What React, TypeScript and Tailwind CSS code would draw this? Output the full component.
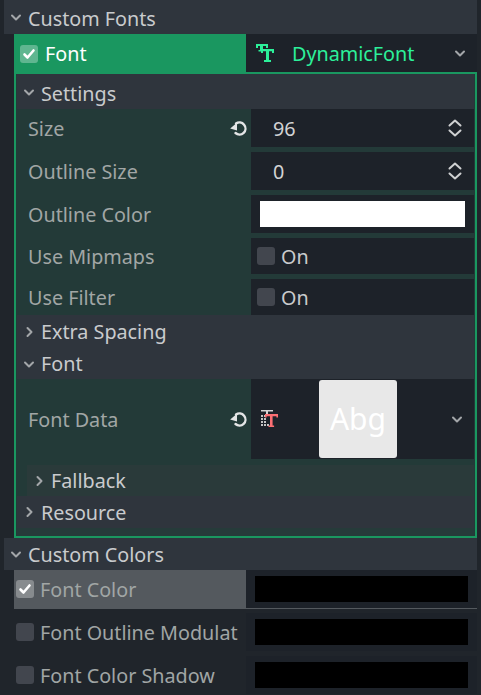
import React from "react";

const Chevron = ({ open, className = "" }: { open: boolean; className?: string }) => (
  <svg width="12" height="12" viewBox="0 0 12 12" className={`flex-none ${className}`} fill="none" stroke="#a3a6a9" strokeWidth="2" strokeLinecap="round" strokeLinejoin="round">
    {open ? <path d="M2 4.5 6 8.5l4-4" /> : <path d="M4.5 2 8.5 6l-4 4" />}
  </svg>
);

const Reset = () => (
  <svg width="18" height="18" viewBox="0 0 18 18" className="flex-none" fill="none">
    <path d="M7 4.6A6 6 0 1 1 6.5 14" stroke="#e4e5e6" strokeWidth="2.4" strokeLinecap="round" />
    <path d="M1.2 9.5 8 3.8V11.6z" fill="#e4e5e6" />
  </svg>
);

const Spin = () => (
  <svg width="14" height="18" viewBox="0 0 14 18" className="flex-none" fill="none" stroke="#cfd1d2" strokeWidth="2" strokeLinecap="round" strokeLinejoin="round">
    <path d="M1.5 6.5 7 1.5l5.5 5" />
    <path d="M1.5 11.5 7 16.5l5.5-5" />
  </svg>
);

const Check = ({ on }: { on: boolean }) => (
  <span className={`flex h-[18px] w-[18px] flex-none items-center justify-center rounded-[3px] ${on ? "bg-white/30" : "bg-[#42464e]"}`}>
    {on && (
      <svg width="14" height="14" viewBox="0 0 14 14" fill="none" stroke="#ffffff" strokeWidth="2.6" strokeLinecap="round" strokeLinejoin="round">
        <path d="M2.5 7.5 5.5 10.5 11.5 3.5" />
      </svg>
    )}
  </span>
);

const FontIcon = () => (
  <svg width="18" height="20" viewBox="0 0 18 20" className="flex-none" fill="#2cf09a">
    <path d="M0 1h12v2H0zM0 1h2v4H0zM10 1h2v4h-2zM4 1h3v7H4zM2.5 7H5v1.5H2.5z" />
    <path d="M5 6h13v2.2H5zM5 6h2v4H5zM16 6h2v4h-2zM10 6h3v12h-3zM8 17h7v2H8z" />
  </svg>
);

const FontDataIcon = () => (
  <svg width="18" height="18" viewBox="0 0 18 18" className="flex-none">
    <path fill="#d4d4d4" d="M1 0h12v1.5H1zM6 0h2v4H6z" />
    <path fill="#c4c4c4" d="M1 5h2v2H1zM4 5h2v2H4zM1 8h2v2H1zM4 8h2v2H4zM1 11h2v2H1zM4 11h2v2H4zM1 14h2v2H1zM4 14h2v2H4zM7 14h2v2H7z" />
    <path fill="#fb6f73" d="M5 4h13v2.2H5zM5 4h1.6v3.5H5zM16.4 4H18v3.5h-1.6zM10 4h2.6v13H10zM8.5 15.5h5.6V17H8.5z" />
  </svg>
);

const Section = ({ title, open, pad = "pl-[6px]", bg = "bg-[#2f353d]", h = "h-[34px]", shift = "" }: { title: string; open: boolean; pad?: string; bg?: string; h?: string; shift?: string }) => (
  <div className={`flex items-center gap-[6px] text-[#c9cbcd] ${pad} ${bg} ${h}`}>
    <Chevron open={open} />
    <span className={shift}>{title}</span>
  </div>
);

const Prop = ({ label, h, mb, reset, children }: { label: string; h: string; mb: string; reset?: boolean; children: React.ReactNode }) => (
  <div className={`flex ${mb}`}>
    <div className="flex w-[234px] flex-none items-center justify-between pl-[11px] pr-[4px] text-[#a1a6a5]">
      <span className="pt-[2px]">{label}</span>
      {reset && <Reset />}
    </div>
    <div className={`flex flex-1 items-center bg-[#1d2229] ${h}`}>{children}</div>
  </div>
);

const NumberValue = ({ value }: { value: string }) => (
  <div className="flex flex-1 items-center justify-between pl-[22px] pr-[12px] text-[#d2d3d4]">
    <span className="pt-[2px]">{value}</span>
    <Spin />
  </div>
);

const Toggle = () => (
  <div className="flex items-center gap-[6px] pl-[6px] text-[#c9cbcd]">
    <Check on={false} />
    <span className="pt-[2px]">On</span>
  </div>
);

const ColorRow = ({ label, on, hover }: { label: string; on: boolean; hover?: boolean }) => (
  <div className="flex">
    <div className={`flex h-[38px] w-[232px] flex-none items-center gap-[6px] overflow-hidden whitespace-nowrap pl-[2px] text-[#a1a6a5] ${hover ? "bg-[#54595e]" : ""}`}>
      <Check on={on} />
      <span className="pt-[2px]">{label}</span>
    </div>
    <div className="flex h-[38px] flex-1 items-center bg-[#1d2229] px-[9px]">
      <div className="h-[26px] w-full bg-black" />
    </div>
  </div>
);

export default function App() {
  return (
    <div className="h-[695px] w-[481px] overflow-hidden bg-[#20252b] pl-[4px] pr-[4px] font-['Noto_Sans',sans-serif] text-[19.75px] leading-none">
      <Section title="Custom Fonts" open shift="pt-[4px]" />
      <div className="pl-[10px]">
        <div className="flex h-[38px]">
          <div className="flex h-[40px] w-[232px] flex-none items-center gap-[7px] bg-[#1a9760] pl-[6px] text-white">
            <Check on />
            <span>Font</span>
          </div>
          <div className="flex flex-1 items-center justify-between bg-[#1d2229] pl-[10px] pr-[11px]">
            <FontIcon />
            <span className="ml-[18px] flex-1 pt-[2px] text-[#2cf09a]">DynamicFont</span>
            <Chevron open />
          </div>
        </div>
        <div className="border-2 border-[#1a9760] bg-[#233a38] px-[1px]">
          <Section title="Settings" open h="h-[35px]" shift="pt-[4px]" />
          <Prop label="Size" h="h-[38px]" mb="mb-[5px]" reset><NumberValue value="96" /></Prop>
          <Prop label="Outline Size" h="h-[38px]" mb="mb-[5px]"><NumberValue value="0" /></Prop>
          <Prop label="Outline Color" h="h-[38px]" mb="mb-[5px]">
            <div className="mx-[9px] h-[26px] flex-1 bg-white" />
          </Prop>
          <Prop label="Use Mipmaps" h="h-[36px]" mb="mb-[5px]"><Toggle /></Prop>
          <Prop label="Use Filter" h="h-[36px]" mb="mb-0"><Toggle /></Prop>
          <Section title="Extra Spacing" open={false} />
          <Section title="Font" open h="h-[30px]" />
          <Prop label="Font Data" h="h-[80px]" mb="mb-[6px]" reset>
            <div className="flex flex-1 items-center pl-[9px] pr-[11px]">
              <FontDataIcon />
              <div className="ml-[41px] flex h-[78px] w-[78px] flex-none items-center justify-center rounded-[3px] bg-[#e8e8e8] text-[30px] text-white">Abg</div>
              <div className="flex-1" />
              <Chevron open />
            </div>
          </Prop>
          <Section title="Fallback" open={false} pad="ml-[10px] pl-[6px]" bg="bg-[#2a3a3a]" h="h-[31px]" />
          <Section title="Resource" open={false} h="h-[32px]" shift="pt-[2px]" />
          <div className="h-[8px] bg-[#263b3a]" />
        </div>
      </div>
      <Section title="Custom Colors" open h="h-[32px]" shift="pt-[2px]" />
      <div className="pl-[10px]">
        <ColorRow label="Font Color" on hover />
        <div className="h-[5px] border-t border-[#54595e]" />
        <ColorRow label="Font Outline Modulat" on={false} />
        <div className="h-[5px]" />
        <ColorRow label="Font Color Shadow" on={false} />
      </div>
    </div>
  );
}
